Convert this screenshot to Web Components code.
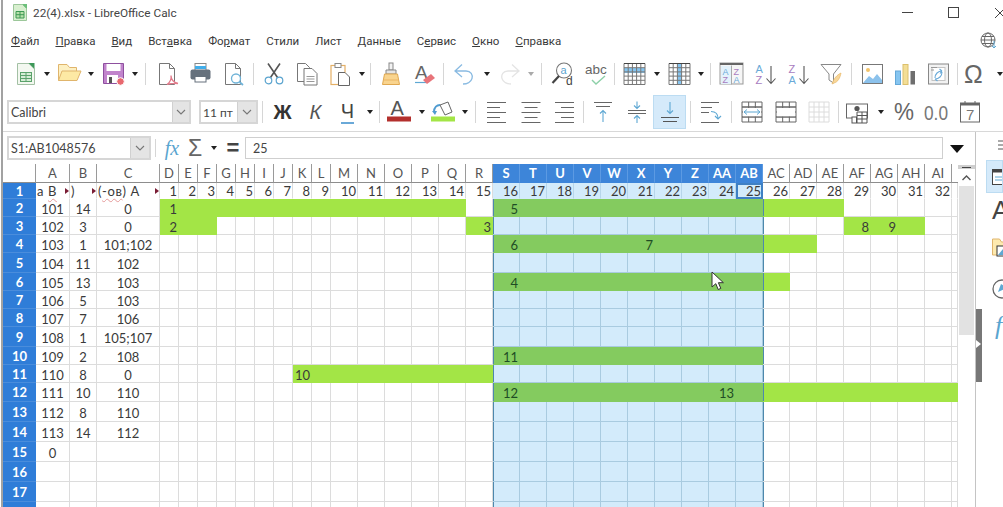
<!DOCTYPE html>
<html>
<head>
<meta charset="utf-8">
<style>
  html, body { margin: 0; height: 507px; overflow: hidden; background: #fff; }
  body { font-family: Roboto, "Open Sans", sans-serif; color: #333; }
  .app { margin-left: 1px; border-left: 2px solid #a2a2a2; height: 507px; display: flex; flex-direction: column; overflow: hidden; }
  .work { display: flex; flex: 1; min-height: 0; }
  .left { flex: 0 0 972px; display: flex; flex-direction: column; min-height: 0; }
  .sheet-row { display: flex; flex: 1; min-height: 0; }
</style>
</head>
<body>
<div class="app">
  <lo-titlebar>22(4).xlsx - LibreOffice Calc</lo-titlebar>
  <lo-menubar>
    <span><u>Ф</u>айл</span><span><u>П</u>равка</span><span><u>В</u>ид</span><span>Вст<u>а</u>вка</span><span>Фо<u>р</u>мат</span><span>Стили</span><span>Лист</span><span><u>Д</u>анные</span><span>С<u>е</u>рвис</span><span><u>О</u>кно</span><span><u>С</u>правка</span>
  </lo-menubar>

  <lo-toolbar pad="5" height="39">
    <lo-tool icon="newdoc"></lo-tool><lo-tool arrow w="11"></lo-tool>
    <lo-tool icon="open"></lo-tool><lo-tool arrow w="11"></lo-tool>
    <lo-tool icon="save"></lo-tool><lo-tool arrow w="11"></lo-tool>
    <lo-tool sep w="10"></lo-tool>
    <lo-tool icon="pdf"></lo-tool><lo-tool icon="print"></lo-tool><lo-tool icon="preview"></lo-tool>
    <lo-tool sep w="8"></lo-tool>
    <lo-tool icon="cut"></lo-tool><lo-tool icon="copy"></lo-tool><lo-tool icon="paste"></lo-tool><lo-tool arrow w="11"></lo-tool>
    <lo-tool sep w="7"></lo-tool>
    <lo-tool icon="brush"></lo-tool><lo-tool icon="clear"></lo-tool>
    <lo-tool sep w="7"></lo-tool>
    <lo-tool icon="undo"></lo-tool><lo-tool arrow w="13"></lo-tool>
    <lo-tool icon="redo"></lo-tool><lo-tool arrow faded w="10"></lo-tool>
    <lo-tool sep w="10"></lo-tool>
    <lo-tool icon="find"></lo-tool><lo-tool icon="spell"></lo-tool>
    <lo-tool sep w="5"></lo-tool>
    <lo-tool icon="gridrow"></lo-tool><lo-tool arrow w="13"></lo-tool>
    <lo-tool icon="gridcol" w="31"></lo-tool><lo-tool arrow w="13"></lo-tool>
    <lo-tool sep w="7"></lo-tool>
    <lo-tool icon="sortbox" w="34"></lo-tool><lo-tool icon="az"></lo-tool><lo-tool icon="za"></lo-tool><lo-tool icon="filter"></lo-tool>
    <lo-tool sep w="8"></lo-tool>
    <lo-tool icon="image"></lo-tool><lo-tool icon="chart"></lo-tool><lo-tool icon="pivot"></lo-tool>
    <lo-tool sep w="6"></lo-tool>
    <lo-tool icon="omega" w="34"></lo-tool><lo-tool arrow w="12"></lo-tool>
  </lo-toolbar>

  <lo-toolbar pad="4" height="38" line>
    <lo-combo w="184">Calibri</lo-combo>
    <lo-tool w="8"></lo-tool>
    <lo-combo w="59" btn="18" style="font-size:12px">11 пт</lo-combo>
    <lo-tool sep w="8"></lo-tool>
    <lo-tool w="33"><span style="font:bold 20px 'Liberation Sans';color:#333">Ж</span></lo-tool>
    <lo-tool w="33"><span style="font:italic 20px 'Liberation Sans';color:#555">К</span></lo-tool>
    <lo-tool w="31"><span style="font:20px 'Liberation Sans';color:#444;border-bottom:2px solid #6aa9d8;line-height:21px">Ч</span></lo-tool>
    <lo-tool arrow w="13"></lo-tool>
    <lo-tool sep w="6"></lo-tool>
    <lo-tool icon="fontcolor" w="34"></lo-tool><lo-tool arrow w="12"></lo-tool>
    <lo-tool icon="fill" w="30"></lo-tool><lo-tool arrow w="14"></lo-tool>
    <lo-tool sep w="7"></lo-tool>
    <lo-tool icon="alignleft" w="35"></lo-tool><lo-tool icon="aligncenter"></lo-tool><lo-tool icon="alignright"></lo-tool>
    <lo-tool sep w="6"></lo-tool>
    <lo-tool icon="vtop" w="34"></lo-tool><lo-tool icon="vmid"></lo-tool><lo-tool icon="vbot" active></lo-tool>
    <lo-tool sep w="8"></lo-tool>
    <lo-tool icon="wrap" w="34"></lo-tool>
    <lo-tool sep w="6"></lo-tool>
    <lo-tool icon="merge" w="35"></lo-tool><lo-tool icon="merge2"></lo-tool><lo-tool icon="merge3"></lo-tool>
    <lo-tool sep w="6"></lo-tool>
    <lo-tool icon="currency" w="32"></lo-tool><lo-tool arrow w="15"></lo-tool>
    <lo-tool icon="percent" w="31"></lo-tool><lo-tool icon="decimal" w="34"></lo-tool><lo-tool icon="date"></lo-tool>
  </lo-toolbar>

  <div class="work">
    <div class="left">
      <lo-formula-bar>25</lo-formula-bar>
      <div class="sheet-row">
        <lo-sheet></lo-sheet>
        <lo-scrollbar></lo-scrollbar>
      </div>
    </div>
    <lo-sidebar></lo-sidebar>
  </div>
</div>

<script>
// helper for the table shaped toolbar icons
function gridLines(x, y, w, h, cols, rows, stroke) {
  let d = `M${x} ${y}h${w}v${h}h${-w}z`;
  for (let i = 1; i < cols; i++) d += `M${x + (w * i) / cols} ${y}v${h}`;
  for (let i = 1; i < rows; i++) d += `M${x} ${y + (h * i) / rows}h${w}`;
  return `<path d="${d}" fill="none" stroke="${stroke}" stroke-width="1"/>`;
}

const svgText = (x, y, size, fill, str, extra = "") =>
  `<text x="${x}" y="${y}" font-size="${size}" fill="${fill}" font-family="Liberation Sans" ${extra}>${str}</text>`;

const arrowV = (x, y1, y2, c = "#5fa8d3") => {
  const dir = y2 > y1 ? -1 : 1;
  return `<path d="M${x} ${y1}V${y2}M${x - 3} ${y2 + dir * 3}L${x} ${y2}L${x + 3} ${y2 + dir * 3}" fill="none" stroke="${c}" stroke-width="1.100"/>`;
};

const ICONS = {
  newdoc: `<path d="M4.500 1.500h11.500l5.500 5.500v15.500h-17z" fill="#f3f8f0" stroke="#a3c0a4"/><path d="M15.500 1h6v6z" fill="#3d9858"/>
    <rect x="7.500" y="10.500" width="11" height="9" fill="#d5ecd5" stroke="#5aa26b"/><path d="M7.500 13.500h11M7.500 16.500h11M13 10.500v9" stroke="#5aa26b" fill="none"/>`,
  open: `<path d="M1.500 18.500V2.500h8.500l2.500 3h7v4" fill="#fdf0c2" stroke="#e0b56c"/><path d="M1.500 18.500l3.500-9.500h19l-4 9.500z" fill="#fde9a4" stroke="#e0b56c"/>`,
  save: `<path d="M2.500 1.500h20v20h-20z" fill="#c184cc" stroke="#8e509f"/><rect x="5.500" y="2" width="14" height="7" fill="#fff"/>
    <rect x="6" y="13" width="11" height="8" fill="#fff"/><rect x="8" y="15" width="3" height="6" fill="#555"/>
    <circle cx="19.500" cy="19.500" r="3.800" fill="#e8686e" stroke="#fff"/>`,
  pdf: `<path d="M4.500 1.500h10l5 5v16h-15z" fill="#fff" stroke="#777"/><path d="M14.500 1.500v5h5" fill="none" stroke="#777"/>
    <path d="M12 22.500c3-2 4.500-6 4-9 0 4 3 7 7 8-4-.5-8 0-11 1z" fill="#fff" stroke="#e27b8b" stroke-width="1.300"/>`,
  print: `<rect x="7" y="1.500" width="11" height="7" fill="#fff" stroke="#888"/><rect x="7" y="4" width="11" height="3" fill="#42aeea"/>
    <rect x="2.500" y="7.500" width="20" height="10" rx="2" fill="#66717d"/><rect x="7" y="14.500" width="11" height="5.500" fill="#fff" stroke="#66717d"/>`,
  preview: `<path d="M4.500 1.500h10l5 5v16h-15z" fill="#fff" stroke="#777"/><path d="M14.500 1.500v5h5" fill="none" stroke="#777"/>
    <circle cx="15" cy="16.500" r="4.500" fill="#fff" stroke="#6fb3d8" stroke-width="1.300"/><path d="M18.500 20l3.500 3" stroke="#6fb3d8" stroke-width="1.800"/>`,
  cut: `<path d="M6 1.500L15.500 15.500M18 1.500L8.500 15.500" stroke="#555" stroke-width="1.600" fill="none"/>
    <circle cx="6.500" cy="18.500" r="3.300" fill="#fff" stroke="#5ba4cf" stroke-width="1.200"/><circle cx="17.500" cy="18.500" r="3.300" fill="#fff" stroke="#5ba4cf" stroke-width="1.200"/>`,
  copy: `<path d="M2.500 1.500h8l4 4v14h-12z" fill="#fff" stroke="#777"/><path d="M9 6.500h8l5 5v11.500h-13z" fill="#fff" stroke="#777"/>
    <path d="M11.500 14.500h8M11.500 17h8M11.500 19.500h8" stroke="#999" fill="none"/>`,
  paste: `<rect x="3" y="3.500" width="14" height="19" fill="#fff" stroke="#e4b066" stroke-width="1.200"/><rect x="7" y="1.500" width="6" height="4" fill="#fff" stroke="#888"/>
    <path d="M10.500 10.500h6.500l4.500 4.500v8.500h-11z" fill="#fff" stroke="#666"/>`,
  brush: `<rect x="10" y="1" width="4" height="7" fill="#f2f2f2" stroke="#888"/><path d="M7 8h10v4H7z" fill="#e4e4e4" stroke="#888"/>
    <path d="M5.500 12h13l2 10.500h-17z" fill="#f9d48e" stroke="#e0a850"/><path d="M4.500 18h15" stroke="#eab565"/>`,
  clear: `${svgText(3, 17, 19, "#666", "A")}<path d="M3 20.500h11" stroke="#5fa8d3" stroke-width="1.200"/><path d="M11 18l8-6 4 4-8 6z" fill="#e8747a"/>`,
  undo: `<path d="M10 2.500L3 9l7 6M3 9h11c5 0 7 4 6 7.500s-5 5.500-9 5.500" fill="none" stroke="#8abbe2" stroke-width="1.300"/>`,
  redo: `<path d="M14 2.500L21 9l-7 6M21 9h-11c-5 0-7 4-6 7.500s5 5.500 9 5.500" fill="none" stroke="#e4e4e4" stroke-width="1.300"/>`,
  find: `<circle cx="13" cy="8.500" r="7.500" fill="none" stroke="#777" stroke-width="1.100"/>${svgText(9.5, 12, 11, "#5ba4cf", "a")}${svgText(15, 23, 12, "#444", "d")}
    <path d="M8 14L1.500 21" stroke="#444" stroke-width="2.200"/>`,
  spell: `${svgText(1, 12, 13.500, "#666", "abc")}<path d="M8 18l4 4 9-8" fill="none" stroke="#8dd0a8" stroke-width="1.400"/>`,
  gridrow: `<rect x="2" y="6" width="21" height="5" fill="#86c5f0"/>${gridLines(2, 1.5, 21, 21, 5, 5, "#777")}<path d="M2 1.500h21" stroke="#444"/>`,
  gridcol: `<rect x="10.400" y="1.500" width="4.200" height="21" fill="#86c5f0"/>${gridLines(2, 1.5, 21, 21, 5, 5, "#777")}<path d="M2 1.500h21" stroke="#444"/>`,
  sortbox: `<rect x="1" y="1" width="23" height="21" fill="#f6f6f6" stroke="#999"/><rect x="1" y="1" width="23" height="2" fill="#666"/><rect x="2" y="4" width="10" height="18" fill="#e4f2fb"/><path d="M12.500 3.500v19" stroke="#aaa"/>
    ${svgText(3.500, 12.500, 9, "#6aaad8", "A")}${svgText(3.500, 21, 9, "#a87cc0", "Z")}${svgText(14.500, 12.500, 9, "#a87cc0", "Z")}${svgText(14.500, 21, 9, "#6aaad8", "A")}`,
  az: `${svgText(2.500, 10.500, 11, "#6aaad8", "A")}${svgText(2.500, 22, 11, "#a87cc0", "Z")}<path d="M18 4V21M13.500 16.500L18 21.500l4.500-5" fill="none" stroke="#555" stroke-width="1.100"/>`,
  za: `${svgText(2.500, 10.500, 11, "#a87cc0", "Z")}${svgText(2.500, 22, 11, "#6aaad8", "A")}<path d="M18 4V21M13.500 16.500L18 21.500l4.500-5" fill="none" stroke="#555" stroke-width="1.100"/>`,
  filter: `<path d="M2 2.500h20l-7.500 9.500v9l-4.500-3v-6z" fill="#fff" stroke="#888"/><path d="M13 22c2-6 5-9 9-11-1 5-3 9-7 10z" fill="#f8d79a" stroke="#e8b765" stroke-width=".7"/>`,
  image: `<rect x="2.500" y="2.500" width="20" height="19" fill="#fff" stroke="#777"/><circle cx="8" cy="8" r="2" fill="#f2c46b"/><path d="M3 21l6-7 4 3 4-5 5 6v3z" fill="#8cc2ec"/>`,
  chart: `<rect x="2.500" y="9" width="5" height="13.500" fill="#86c5f0" stroke="#64a8d8"/><rect x="10" y="2.500" width="5" height="20" fill="#f3de96" stroke="#dcc06c"/><rect x="17.500" y="9" width="4.500" height="13.500" fill="#6e6e6e"/>`,
  pivot: `<rect x="2.500" y="2" width="20" height="20" fill="#f2f2f2" stroke="#888"/><rect x="6" y="5.500" width="13" height="13" fill="#fff" stroke="#c4c4c4"/><path d="M5 5.500h6M5 8h3" stroke="#999"/>
    <path d="M9 16c0-4 3-7 7-7M16 9l-2.500-2M16 9l-2 2.500M16 10c0 4-3 7-7 7M9 17l2.500 2" fill="none" stroke="#6aaad8" stroke-width="1.100"/>`,
  omega: `${svgText(-1, 21, 25, "#666", "Ω")}`,
  fontcolor: `${svgText(3.500, 15, 20, "#555", "A")}<rect x="0" y="16.500" width="24" height="5" fill="#b3302d"/>`,
  fill: `<rect x="0" y="16.500" width="24" height="5" fill="#a3e546"/><path d="M9 5l8-3 4 10-7 3z" fill="#fff" stroke="#666"/><path d="M3 12c0-5 3-7 6-7" fill="none" stroke="#4f9bd0" stroke-width="2"/><path d="M1 11l3 4 2-4z" fill="#4f9bd0"/>`,
  alignleft: `<path d="M2 2.500h19M2 7.500h13M2 12.500h19M2 17.500h13M2 22.500h19" stroke="#666" fill="none"/>`,
  aligncenter: `<path d="M2.500 2.500h19M5.500 7.500h13M2.500 12.500h19M5.500 17.500h13M2.500 22.500h19" stroke="#666" fill="none"/>`,
  alignright: `<path d="M3 2.500h19M9 7.500h13M3 12.500h19M9 17.500h13M3 22.500h19" stroke="#666" fill="none"/>`,
  vtop: `<path d="M3 2.500h18M5 6.500h14" stroke="#666" fill="none"/>${arrowV(12, 22, 10.500)}`,
  vmid: `<path d="M3 10.500h18M3 13.500h18" stroke="#666" fill="none"/>${arrowV(12, 1.500, 8.500)}${arrowV(12, 23, 15.500)}`,
  vbot: `<path d="M3 17.500h18M5 21.500h14" stroke="#555" fill="none"/>${arrowV(12, 2, 13.500)}`,
  wrap: `<path d="M2 2.500h18M2 7.500h11M2 12.500h8M2 22.500h18" stroke="#666" fill="none"/><path d="M12 11.500c4 0 7 2 7 7M16 16l3 3 3-3" fill="none" stroke="#5fa8d3" stroke-width="1.100"/>`,
  merge: `${gridLines(2, 2, 20, 20, 3, 4, "#666")}<rect x="3" y="8" width="18" height="8.500" fill="#fff"/><path d="M4 12h16M7 9.500L4 12l3 2.500M17 9.500l3 2.500-3 2.500" fill="none" stroke="#5fa8d3"/><path d="M2 7h20M2 17h20" stroke="#666"/>`,
  merge2: `${gridLines(2, 2, 20, 20, 3, 4, "#666")}<rect x="3" y="8" width="18" height="8.500" fill="#fff"/><path d="M2 7h20M2 17h20" stroke="#666"/>`,
  merge3: `${gridLines(2, 2, 20, 20, 4, 4, "#dcdcdc")}`,
  currency: `<rect x="1.500" y="4" width="21" height="14" fill="#fff" stroke="#666"/><circle cx="12" cy="8.500" r="2.600" fill="#555"/>
    <rect x="7" y="17" width="4.500" height="6" fill="#fff" stroke="#555"/><path d="M12 12h10v11H12z" fill="#fff" stroke="#555"/><path d="M12 15.500h10M12 19h10M17 12v11" stroke="#555"/>`,
  percent: `${svgText(2, 20, 23, "#666", "%", 'textLength="20" lengthAdjust="spacingAndGlyphs"')}`,
  decimal: `${svgText(0, 20, 21, "#777", "0.0", 'textLength="24" lengthAdjust="spacingAndGlyphs"')}`,
  date: `<rect x="2.500" y="3" width="19" height="19" fill="#fff" stroke="#666"/><path d="M2.500 3h19v2.500h-19z" fill="#666"/><path d="M7 1v3M17 1v3" stroke="#666"/>${svgText(8, 20, 15, "#777", "7")}`,
};

const toolTemplate = document.createElement("template");
toolTemplate.innerHTML = `
  <style>
    :host {
      display: flex;
      flex: 0 0 auto;
      height: 34px;
      align-items: center;
      justify-content: center;
      box-sizing: border-box;
    }
    :host([active]) {
      background: #d5eafa;
      border: 1px solid #bcdcf2;
    }
    svg { width: 24px; height: 24px; overflow: visible; display: block; }
    .arrow { width: 0; height: 0; border: 3.5px solid transparent; border-top: 4px solid #222; border-bottom: 0; }
    :host([faded]) .arrow { border-top-color: #aaa; }
    .sep { width: 1px; height: 22px; background: #d6d6d6; }
  </style>
  <slot></slot>
`;

class LoTool extends HTMLElement {
  constructor() {
    super();
    this.attachShadow({ mode: "open" });
    this.shadowRoot.appendChild(toolTemplate.content.cloneNode(true));
  }
  connectedCallback() {
    this.style.width = (this.getAttribute("w") || 33) + "px";
    const icon = this.getAttribute("icon");
    if (icon) {
      const wrap = document.createElement("div");
      wrap.innerHTML = `<svg viewBox="0 0 24 24">${ICONS[icon]}</svg>`;
      this.shadowRoot.appendChild(wrap.firstElementChild);
    }
    if (this.hasAttribute("arrow") || this.hasAttribute("sep")) {
      const el = document.createElement("div");
      el.className = this.hasAttribute("arrow") ? "arrow" : "sep";
      this.shadowRoot.appendChild(el);
    }
  }
}
customElements.define("lo-tool", LoTool);

class LoToolbar extends HTMLElement {
  constructor() {
    super();
    this.attachShadow({ mode: "open" });
    this.shadowRoot.innerHTML = `
      <style>
        :host { display: flex; align-items: center; flex: 0 0 auto; box-sizing: border-box; white-space: nowrap; overflow: hidden; }
        :host([line]) { border-bottom: 1px solid #d8d8d8; }
      </style>
      <slot></slot>
    `;
  }
  connectedCallback() {
    this.style.paddingLeft = (this.getAttribute("pad") || 0) + "px";
    this.style.height = (Number(this.getAttribute("height")) + (this.hasAttribute("line") ? 1 : 0)) + "px";
  }
}
customElements.define("lo-toolbar", LoToolbar);

class LoCombo extends HTMLElement {
  constructor() {
    super();
    this.attachShadow({ mode: "open" });
    this.shadowRoot.innerHTML = `
      <style>
        :host {
          display: flex;
          flex: 0 0 auto;
          height: 24px;
          box-sizing: border-box;
          border: 2px solid #d6d6d6;
          background: #fff;
          font: 12.5px Lato, "Open Sans", sans-serif;
          color: #444;
        }
        .text { flex: 1; padding-left: 2px; line-height: 21px; white-space: nowrap; }
        .btn { flex: 0 0 auto; background: #e4e4e4; display: flex; align-items: center; justify-content: center; border-left: 1px solid #d0d0d0; }
        svg { width: 10px; height: 6px; }
      </style>
      <div class="text"><slot></slot></div>
      <div class="btn"><svg viewBox="0 0 10 6"><path d="M1 1l4 4 4-4" fill="none" stroke="#777" stroke-width="1.100"/></svg></div>
    `;
  }
  connectedCallback() {
    this.style.width = this.getAttribute("w") + "px";
    this.shadowRoot.querySelector(".btn").style.width = (this.getAttribute("btn") || 16) + "px";
  }
}
customElements.define("lo-combo", LoCombo);

class LoTitlebar extends HTMLElement {
  constructor() {
    super();
    this.attachShadow({ mode: "open" });
    this.shadowRoot.innerHTML = `
      <style>
        :host { display: flex; align-items: center; flex: 0 0 25px; font: 11.8px Roboto, "Open Sans", sans-serif; color: #444; padding-left: 10px; }
        svg.logo { width: 14px; height: 17px; margin-right: 6px; flex: none; }
        .text { flex: 1; }
        .controls { display: flex; align-items: center; }
        .min { width: 11px; height: 1px; background: #444; margin-right: 35px; }
        .max { width: 9px; height: 9px; border: 1px solid #444; margin-right: 36px; }
        .close { width: 8px; height: 10px; overflow: hidden; }
        .close svg { width: 10px; height: 10px; display: block; }
      </style>
      <svg class="logo" viewBox="0 0 14 17"><path d="M.5.500h9l4 4v12h-13z" fill="#d8efcf" stroke="#9cc79a"/><path d="M9 0h5v5z" fill="#6cc07a"/><path d="M3 7.500h8v6.500H3zM3 10.700h8M7 7.500v6.500" fill="#b7e0a9" stroke="#3e9a55"/></svg>
      <div class="text"><slot></slot></div>
      <div class="controls">
        <div class="min"></div><div class="max"></div>
        <div class="close"><svg viewBox="0 0 10 10"><path d="M0 0l10 10M10 0L0 10" stroke="#444"/></svg></div>
      </div>
    `;
  }
}
customElements.define("lo-titlebar", LoTitlebar);

class LoMenubar extends HTMLElement {
  constructor() {
    super();
    this.attachShadow({ mode: "open" });
    this.shadowRoot.innerHTML = `
      <style>
        :host { display: flex; align-items: center; flex: 0 0 29px; padding-top: 2px; box-sizing: border-box; font: 11.5px Roboto, "Open Sans", sans-serif; color: #3a3a3a; position: relative; }
        .items { display: flex; gap: 16px; padding-left: 8px; }
        svg { position: absolute; left: 977px; top: 7px; width: 18px; height: 18px; }
      </style>
      <div class="items"><slot></slot></div>
      <svg viewBox="0 0 18 18"><circle cx="8" cy="8" r="7" fill="none" stroke="#666"/><ellipse cx="8" cy="8" rx="3.500" ry="7" fill="none" stroke="#666"/><path d="M1 8h14M2 4.500h12M2 11.500h12" stroke="#666" fill="none"/><path d="M14 9v7M12 14l2 2 2-2" stroke="#5fa8d3" fill="none"/></svg>
    `;
  }
}
customElements.define("lo-menubar", LoMenubar);

class LoFormulaBar extends HTMLElement {
  constructor() {
    super();
    this.attachShadow({ mode: "open" });
    this.shadowRoot.innerHTML = `
      <style>
        :host { display: flex; align-items: center; flex: 0 0 32px; padding-left: 4px; box-sizing: border-box; height: 32px; }
        .sep { flex: 0 0 8px; display: flex; justify-content: center; }
        .sep i { width: 1px; height: 18px; background: #d6d6d6; }
        .b { flex: none; display: flex; align-items: center; justify-content: center; height: 24px; }
        .fx { width: 26px; font: italic 20px "Liberation Serif", serif; color: #5aa5cf; }
        .sum { width: 20px; font: 23px "Liberation Sans", sans-serif; color: #666; }
        .arrow { width: 18px; }
        .arrow i { width: 0; height: 0; border: 3.5px solid transparent; border-top: 4px solid #222; border-bottom: 0; }
        .eq { width: 20px; font: bold 22px "Liberation Sans", sans-serif; color: #444; }
        .input { flex: 0 0 auto; width: 698px; margin-left: 2px; height: 22px; box-sizing: border-box; border: 1px solid #cfcfcf; font: 12.5px Lato, sans-serif; color: #444; line-height: 21px; padding-left: 7px; }
        .drop { width: 28px; }
        .drop i { width: 0; height: 0; border: 7px solid transparent; border-top: 8px solid #111; border-bottom: 0; margin-top: 2px; }
      </style>
      <lo-combo w="144" btn="18">S1:AB1048576</lo-combo>
      <div class="sep"><i></i></div>
      <div class="b fx">fx</div>
      <div class="b sum">Σ</div>
      <div class="b arrow"><i></i></div>
      <div class="b eq">=</div>
      <div class="input"><slot></slot></div>
      <div class="b drop"><i></i></div>
    `;
  }
}
customElements.define("lo-formula-bar", LoFormulaBar);

const COLS = ["A","B","C","D","E","F","G","H","I","J","K","L","M","N","O","P","Q","R","S","T","U","V","W","X","Y","Z","AA","AB","AC","AD","AE","AF","AG","AH","AI",""];
const COL_WIDTHS = [34, 27, 63, ...Array(9).fill(19), ...Array(23).fill(27), 6];
const ROW_HEIGHTS = [16, 18, 18, 18, 20, 18, 18, 18, 20, 18, 18, 19, 20, 20, 20, 20, 20, 20];

const ABC = [
  ["101","14","0"], ["102","3","0"], ["103","1","101;102"], ["104","11","102"], ["105","13","103"],
  ["106","5","103"], ["107","7","106"], ["108","1","105;107"], ["109","2","108"], ["110","8","0"],
  ["111","10","110"], ["112","8","110"], ["113","14","112"], ["0","",""],
];
// sheet row -> column index ranges [from, to] painted green
const BARS = {
  2: [[3, 16], [18, 30]],
  3: [[3, 5], [17, 17], [31, 33]],
  4: [[18, 29]],
  6: [[18, 28]],
  10: [[18, 27]],
  11: [[10, 17]],
  12: [[18, 35]],
};
const LABELS = {
  "2:D": "1", "3:D": "2", "2:S": "5", "3:R": "3", "3:AF": "8", "3:AG": "9",
  "4:S": "6", "4:X": "7", "6:S": "4", "10:S": "11", "11:K": "10", "12:S": "12", "12:AA": "13",
};
const SEL_FROM = 18;
const SEL_TO = 27;

class LoSheet extends HTMLElement {
  constructor() {
    super();
    this.attachShadow({ mode: "open" });
    const columns = [33, ...COL_WIDTHS].map((w) => w + "px").join(" ");
    const rows = [19, ...ROW_HEIGHTS].map((h) => h + "px").join(" ");
    this.shadowRoot.innerHTML = `
      <style>
        :host { display: block; flex: 0 0 955px; overflow: hidden; position: relative; font: 13px Lato, "Open Sans", sans-serif; color: #3a3a3a; }
        .grid { display: grid; grid-template-columns: ${columns}; grid-template-rows: ${rows}; }
        .cell, .head, .rowhead { box-sizing: border-box; display: flex; align-items: center; white-space: nowrap; }
        .cell { border-right: 1px solid #dcdcdc; border-bottom: 1px solid #dcdcdc; justify-content: flex-end; padding-right: 1px; padding-top: 2px; }
        .cell.txt { justify-content: center; padding-right: 0; }
        .cell.note { justify-content: flex-start; padding-left: 1px; padding-right: 0; padding-top: 0; position: relative; border-bottom-color: transparent; letter-spacing: .6px; }
        .cell.note::after { content: ""; position: absolute; right: 0; top: 5px; border: 3px solid transparent; border-left: 4px solid #7a1d35; border-right: 0; }
        .note span { text-decoration: underline wavy #e59a9a 1px; text-underline-offset: 2px; }
        .first { border-bottom-color: transparent; padding-top: 0; }
        .sel { background: #d3ebfb; border-right-color: #a9cbe0; border-bottom-color: #a9cbe0; }
        .first.sel { background: #d3ebfb; border-right-color: #b7d6ea; border-bottom-color: transparent; }
        .green { background: #a3e546; border-color: #a3e546; }
        .green.sel { background: #84cb5f; border-color: #84cb5f; color: #1f4d25; }
        .edge { box-shadow: inset 1px 0 0 #4d88ad; }
        .cursor { outline: 2px solid #3f80c4; outline-offset: -2px; }
        .head { justify-content: center; border-right: 1px solid #9a9a9a; border-bottom: 1px solid #8d8d8d; color: #555; background: #fff; }
        .head.sel { background: #3d85d9; color: #fff; font-weight: 700; border-right-color: #5c9ae2; border-bottom-color: #3d85d9; }
        .corner { border-right: 1px solid #9a9a9a; border-bottom: 1px solid #8d8d8d; }
        .rowhead { justify-content: center; background: #2f7dd8; color: #fff; font-weight: 700; border-bottom: 1px solid #4a8ddc; }
        .pointer { position: absolute; left: 708px; top: 107px; width: 14px; height: 20px; z-index: 2; }
      </style>
      <div class="grid">${this.buildCells()}</div>
      <svg class="pointer" viewBox="0 0 14 20"><path d="M1 1v15l3.800-3.300 2.400 5.800 2.600-1.100-2.400-5.700h5z" fill="#fff" stroke="#333" stroke-width="1"/></svg>
    `;
  }

  buildCells() {
    let html = `<div class="corner"></div>`;
    COLS.forEach((name, c) => {
      const sel = c >= SEL_FROM && c <= SEL_TO ? " sel" : "";
      html += `<div class="head${sel}"${name ? "" : ' style="border-right:0"'}>${name}</div>`;
    });
    ROW_HEIGHTS.forEach((_, r) => {
      const row = r + 1;
      // row 18 is only a sliver at the bottom edge, its number stays out of the picture
      html += `<div class="rowhead">${row < 18 ? row : ""}</div>`;
      COLS.forEach((name, c) => (html += this.buildCell(row, name, c)));
    });
    return html;
  }

  buildCell(row, name, c) {
    const sel = c >= SEL_FROM && c <= SEL_TO;
    const green = (BARS[row] || []).some(([a, b]) => c >= a && c <= b);
    let cls = "cell";
    if (sel) cls += " sel";
    if (green) cls += " green";
    if (row === 1) cls += " first";
    // the selection frame sits on the left edge of S and of the column after AB
    if (row > 1 && (c === SEL_FROM || c === SEL_TO + 1)) cls += " edge";
    let text = LABELS[`${row}:${name}`] || "";
    if (row === 1) {
      if (c === 0) return `<div class="cell note">а&nbsp;<span>В</span></div>`;
      if (c === 1) return `<div class="cell note">)</div>`;
      if (c === 2) return `<div class="cell note">(<span>-ов</span>)&nbsp;А</div>`;
      if (c >= 3 && c < 35) text = String(c - 2);
      if (name === "AB") cls += " cursor";
    } else if (c < 3) {
      cls += " txt";
      text = (ABC[row - 2] || [])[c] || "";
    }
    return `<div class="${cls}">${text}</div>`;
  }
}
customElements.define("lo-sheet", LoSheet);

class LoScrollbar extends HTMLElement {
  constructor() {
    super();
    this.attachShadow({ mode: "open" });
    this.shadowRoot.innerHTML = `
      <style>
        :host { display: flex; flex-direction: column; flex: 0 0 17px; align-items: stretch; }
        .handle { height: 4px; margin-top: 1px; background: #cfcfcf; display: flex; align-items: center; justify-content: center; }
        .handle i { width: 9px; height: 1px; background: #444; }
        .up { height: 17px; display: flex; align-items: center; justify-content: center; }
        svg { width: 9px; height: 6px; }
        .thumb { height: 149px; margin: 0 1px; background: #e2e2e2; }
      </style>
      <div class="handle"><i></i></div>
      <div class="up"><svg viewBox="0 0 9 6"><path d="M.5 5L4.500 1l4 4" fill="none" stroke="#555" stroke-width="1.400"/></svg></div>
      <div class="thumb"></div>
    `;
  }
}
customElements.define("lo-scrollbar", LoScrollbar);

class LoSidebar extends HTMLElement {
  constructor() {
    super();
    this.attachShadow({ mode: "open" });
    this.shadowRoot.innerHTML = `
      <style>
        :host { display: flex; flex-direction: column; flex: 1; border-left: 1px solid #c4c4c4; position: relative; overflow: hidden; padding-left: 10px; }
        .menu { height: 28px; margin-left: 12px; display: flex; align-items: center; }
        .item { display: flex; height: 37px; align-items: center; padding-left: 6px; flex: none; overflow: hidden; }
        .item.on { height: 33px; background: #d5eafa; border: 1px solid #bcdcf2; box-sizing: border-box; margin-bottom: 4px; padding-left: 5px; }
        svg { width: 20px; height: 20px; flex: none; display: block; }
        .a { font: 26px "Liberation Sans", sans-serif; color: #444; line-height: 26px; }
        .f { font: italic 26px "Liberation Serif", serif; color: #5aa5cf; padding-left: 3px; }
        .handle { position: absolute; left: 0; top: 177px; width: 6px; height: 73px; background: #777; }
        .handle i { position: absolute; left: 0; top: 31px; border: 4px solid transparent; border-left: 5px solid #fff; border-right: 0; }
      </style>
      <div class="menu"><svg viewBox="0 0 20 20"><path d="M0 5h12M0 9h12M0 13h12" stroke="#555"/></svg></div>
      <div class="item on"><svg viewBox="0 0 20 20"><rect x=".5" y="2.500" width="19" height="15" fill="#fff" stroke="#444"/><path d="M0 4h20" stroke="#444" stroke-width="3"/><path d="M3 10h9M3 13h9" stroke="#5fa8d3"/></svg></div>
      <div class="item" style="height:26px"><span class="a">A</span></div>
      <div class="item" style="height:48px"><svg viewBox="0 0 20 20"><path d="M.5 18V2h7l2 3h10v13z" fill="#fdeab0" stroke="#e0b56c"/><rect x="5" y="9" width="12" height="10" fill="#fff" stroke="#333"/><path d="M6 18l5-6 5 6z" fill="#5fa8d3"/></svg></div>
      <div class="item" style="height:36px"><svg viewBox="0 0 20 20"><circle cx="10" cy="10" r="9" fill="#fff" stroke="#666" stroke-width="1.300"/><path d="M6 13l3-8 6 4z" fill="#5fa8d3"/></svg></div>
      <div class="item"><span class="f">f</span></div>
      <div class="handle"><i></i></div>
    `;
  }
}
customElements.define("lo-sidebar", LoSidebar);
</script>
</body>
</html>
